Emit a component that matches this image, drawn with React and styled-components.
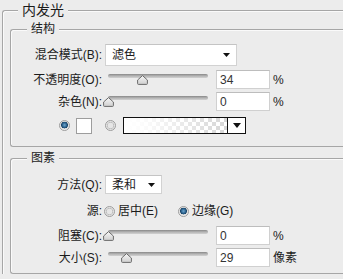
import React from 'react'
import styled, { createGlobalStyle } from 'styled-components'

const GlobalStyle = createGlobalStyle`
  html, body {
    margin: 0;
    background: #ececec;
    overflow: hidden;
  }
  body {
    font-family: "Liberation Sans", "Noto Sans CJK SC", sans-serif;
    font-size: 12px;
    color: #1b1b1b;
  }
`

const Panel = styled.section`
  margin: 10px 0 0 2px;
  padding: 0 0 0 7px;
  border: 1px solid #a6a6a6;
  border-right: none;
  border-bottom: none;
  border-radius: 3px 0 0 0;
  box-shadow: inset 1px 1px 0 #fafafa;
`

const Group = styled.div`
  margin-top: ${props => props.$top}px;
  padding-bottom: ${props => props.$bottom}px;
  border: 1px solid #a6a6a6;
  border-right: none;
  border-radius: 3px 0 0 3px;
  box-shadow: inset 1px 1px 0 #fafafa;
`

const Legend = styled.div`
  display: flex;
  height: ${props => props.$height}px;
  margin-top: ${props => -props.$lift}px;
  padding-left: ${props => props.$offset}px;
  font-size: ${props => props.$size || 12}px;
  line-height: ${props => props.$height}px;
`

const LegendText = styled.span`
  padding: 0 4px;
  background: #ececec;
`

const Row = styled.div`
  display: flex;
  align-items: center;
  height: ${props => props.$height}px;
  margin-top: ${props => props.$top}px;
  line-height: 14px;
  white-space: nowrap;
`

const Label = styled.span`
  width: 91px;
  margin-right: 3px;
  text-align: right;
  flex: none;
`

const Select = styled.div`
  box-sizing: border-box;
  width: ${props => props.$width}px;
  height: 100%;
  padding: 0 6px;
  display: flex;
  align-items: center;
  justify-content: space-between;
  background: #fff;
  border: 1px solid #d2d2d2;
  border-top-color: #c4c4c4;
`

const Arrow = ({ width = 7, height = 4 }) => (
  <svg width={width} height={height} viewBox={`0 0 ${width} ${height}`}>
    <polygon points={`0,0 ${width},0 ${width / 2},${height}`} fill="#111" />
  </svg>
)

const Slider = styled.div`
  position: relative;
  width: 111px;
  height: 100%;
  flex: none;
`

const Track = styled.div`
  margin: 4px 0 0 3px;
  width: 100px;
  height: 4px;
  border-radius: 2px;
  background: linear-gradient(#878787, #b4b4b4 50%, #d2d2d2);
`

const Thumb = styled.svg`
  position: absolute;
  top: 5px;
`

const SliderControl = ({ value }) => (
  <Slider>
    <Track />
    <Thumb width="11" height="10" viewBox="0 0 11 10" style={{ left: 3 + value - 5 }}>
      <defs>
        <linearGradient id="thumbFill" x1="0" y1="0" x2="0" y2="1">
          <stop offset="0" stopColor="#f7f7f7" />
          <stop offset="1" stopColor="#cfcfcf" />
        </linearGradient>
      </defs>
      <path
        d="M5.5 0.6 L10.4 5 L10.4 8.6 Q10.4 9.4 9.6 9.4 L1.4 9.4 Q0.6 9.4 0.6 8.6 L0.6 5 Z"
        fill="url(#thumbFill)"
        stroke="#6b6b6b"
        strokeWidth="1"
      />
    </Thumb>
  </Slider>
)

const Field = styled.div`
  box-sizing: border-box;
  width: 54px;
  height: 100%;
  padding-left: 3px;
  display: flex;
  align-items: center;
  background: #fff;
  border: 1px solid #d0d0d0;
  border-top-color: #bdbdbd;
  color: #333;
`

const Unit = styled.span`
  margin-left: 3px;
`

const Radio = styled.span`
  box-sizing: border-box;
  width: 11px;
  height: 11px;
  flex: none;
  border-radius: 50%;
  border: 1px solid #9c9c9c;
  margin-left: ${props => props.$left || 0}px;
  background: ${props =>
    props.$checked
      ? 'radial-gradient(circle at 50% 45%, #6fa7cf 0, #245a85 2.5px, #1d4466 3.2px, #dcdcdc 3.6px, #f4f4f4 5px)'
      : 'radial-gradient(circle, #e6e6e6 0, #e6e6e6 2.6px, #bdbdbd 3.2px, #dcdcdc 3.8px, #f6f6f6 5px)'};
`

const Option = styled.span`
  display: flex;
  align-items: center;
  gap: 3px;
  margin-left: ${props => props.$left}px;
`

const Swatch = styled.span`
  box-sizing: border-box;
  width: 16px;
  height: 16px;
  margin-left: 6px;
  background: #fff;
  border: 1px solid #9d9d9d;
`

const GradientBox = styled.div`
  box-sizing: border-box;
  width: 123px;
  height: 17px;
  margin-left: 7px;
  display: flex;
  border: 1px solid #111;
  background: #fff;
`

const GradientFill = styled.div`
  flex: 1;
  background:
    linear-gradient(to right, #fff 0%, rgba(255, 255, 255, 0.9) 20%, rgba(255, 255, 255, 0) 100%),
    repeating-conic-gradient(#d6d6d6 0 25%, #fff 0 50%) 0 0 / 8px 8px;
`

const GradientArrow = styled.div`
  width: 17px;
  display: flex;
  align-items: center;
  justify-content: center;
  border-left: 1px solid #111;
`

const App = () => (
  <>
    <GlobalStyle />
    <Panel>
      <Legend $offset={8} $lift={11} $size={14} $height={20}>
        <LegendText>内发光</LegendText>
      </Legend>

      <Group $top={9} $bottom={12}>
        <Legend $offset={16} $lift={10} $height={18}>
          <LegendText>结构</LegendText>
        </Legend>
        <Row $height={22} $top={6}>
          <Label>混合模式(B):</Label>
          <Select $width={132}>
            <span>滤色</span>
            <Arrow />
          </Select>
        </Row>
        <Row $height={19} $top={4}>
          <Label>不透明度(O):</Label>
          <SliderControl value={34} />
          <Field>34</Field>
          <Unit>%</Unit>
        </Row>
        <Row $height={19} $top={3}>
          <Label>杂色(N):</Label>
          <SliderControl value={0} />
          <Field>0</Field>
          <Unit>%</Unit>
        </Row>
        <Row $height={17} $top={6}>
          <Radio $checked $left={48} />
          <Swatch />
          <Radio $left={13} />
          <GradientBox>
            <GradientFill />
            <GradientArrow>
              <Arrow width={8} height={5} />
            </GradientArrow>
          </GradientBox>
        </Row>
      </Group>

      <Group $top={11} $bottom={6}>
        <Legend $offset={16} $lift={10} $height={18}>
          <LegendText>图素</LegendText>
        </Legend>
        <Row $height={19} $top={8}>
          <Label>方法(Q):</Label>
          <Select $width={57}>
            <span>柔和</span>
            <Arrow />
          </Select>
        </Row>
        <Row $height={16} $top={9}>
          <Label>源:</Label>
          <Option $left={-1}>
            <Radio />
            <span>居中(E)</span>
          </Option>
          <Option $left={20}>
            <Radio $checked />
            <span>边缘(G)</span>
          </Option>
        </Row>
        <Row $height={19} $top={7}>
          <Label>阻塞(C):</Label>
          <SliderControl value={0} />
          <Field>0</Field>
          <Unit>%</Unit>
        </Row>
        <Row $height={19} $top={3}>
          <Label>大小(S):</Label>
          <SliderControl value={18} />
          <Field>29</Field>
          <Unit>像素</Unit>
        </Row>
      </Group>
    </Panel>
  </>
)

export default App
